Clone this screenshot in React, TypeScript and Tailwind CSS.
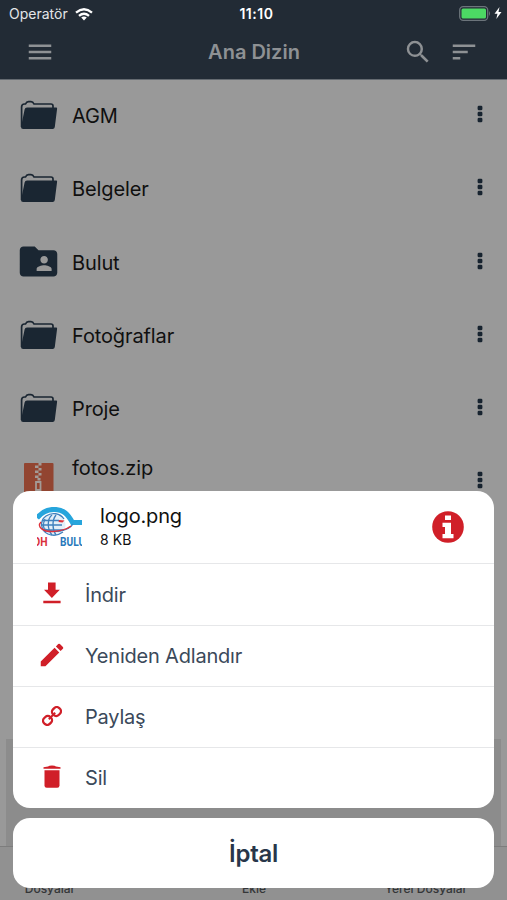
import { MdEdit, MdFolderShared, MdMenu, MdSearch, MdSort } from "react-icons/md";

const FolderIcon = () => (
  <svg viewBox="0 0 38 30" className="w-[38px] h-[30px]">
    <path
      d="M1.600 27V7Q1.600 4 4.500 4H5.500Q6.500 1.700 8.500 1.700H11Q13 1.700 14 4H31Q33 4 33 6V8"
      fill="none"
      stroke="#1a2632"
      strokeWidth="1.700"
    />
    <path d="M7 7.500H36.200Q37.300 7.500 37.100 8.700L34.800 27Q34.500 29 32.600 29H3.300Q0.800 29 1.100 26.500L4.600 9.500Q5 7.500 7 7.500Z" fill="#1a2632" />
  </svg>
);

const ZipIcon = () => (
  <svg viewBox="0 0 30 38" className="w-[30px] h-[38px] ml-1">
    <rect width="29.500" height="38" rx="1" fill="#924531" />
    <path
      d="M14.500 0h3v2.500h-3zM11 2.500h3.500v2.500H11zM14.500 5h3v2.500h-3zM11 7.500h3.500v2.500H11zM14.500 10h3v2.500h-3zM11 12.500h3.500v2.500H11zM13.500 15h3v2.500h-3z"
      fill="#a39b97"
    />
    <path d="M12 19h4.500v8H12z" fill="none" stroke="#a39b97" strokeWidth="1.800" />
  </svg>
);

const DotsIcon = () => (
  <svg viewBox="0 0 6 18" className="w-[6px] h-[18px]" fill="#17232f">
    <rect x="0.600" y="0.700" width="4.800" height="4.600" rx="1.300" />
    <rect x="0.600" y="6.700" width="4.800" height="4.600" rx="1.300" />
    <rect x="0.600" y="12.700" width="4.800" height="4.600" rx="1.300" />
  </svg>
);

const DownloadIcon = () => (
  <svg viewBox="0 0 18 22" className="w-[18px] h-[22px] mb-[3px]" fill="#d01f28">
    <path d="M5 0.500h7.600v7.200h4.200L8.900 16 1 7.700h4zM0.300 18.800h17.300v2.500H0.300z" />
  </svg>
);

const LinkIcon = () => (
  <svg viewBox="0 0 20 20" className="w-[20px] h-[20px] mb-[3px]">
    <g transform="rotate(-45 10 10)" fill="none" stroke="#d01f28" strokeWidth="2.300">
      <rect x="-0.700" y="6" width="8.800" height="8" rx="3.500" />
      <rect x="11.900" y="6" width="8.800" height="8" rx="3.500" />
      <path d="M5.500 10h9" strokeWidth="2" />
    </g>
  </svg>
);

const TrashIcon = () => (
  <svg viewBox="0 0 18 23" className="w-[18px] h-[23px] mb-[3px]" fill="#d01f28">
    <path d="M0.500 2.200L5 1.600Q6 0.500 9 0.500T13 1.600L17.500 2.200V3.800H0.500z" />
    <path d="M1.500 5.300h15v15.200Q16.500 22.700 14.300 22.700H3.700Q1.500 22.700 1.500 20.500z" />
  </svg>
);

const InfoIcon = () => (
  <svg viewBox="0 0 32 32" className="w-[32px] h-[32px]">
    <circle cx="16" cy="16" r="15.800" fill="#d01f28" />
    <path d="M13 4.500h6v4.500h-6zM10.500 11.800h8.500v11.200h2.500v4.200h-11v-4.200h2.500v-7h-2.500z" fill="#fff" />
  </svg>
);

const LogoIcon = () => (
  <svg viewBox="0 0 45 40" className="w-[45px] h-[40px]">
    <ellipse cx="16" cy="18" rx="12.500" ry="10.500" fill="#e4eff8" />
    <g fill="none" stroke="#3f80bd" strokeWidth="1.300">
      <path d="M27 12C23 6 15 5 9 9C2 14 4 24 11 27C16 29 22 28 26 25" />
      <path d="M15 8C10 12 10 22 15 28M19 8C15 13 15 22 19 28M8 12C6 16 6 21 9 25" />
      <path d="M6 13.500H22M4 18H25M6 23H27" />
    </g>
    <path d="M0 11C5 4.500 11 2.400 17 2.400C27 2.400 31 7.500 35.500 15.500H45" fill="none" stroke="#27a5dc" strokeWidth="5" />
    <path d="M8 22C16 26 31 25 36 17" fill="none" stroke="#3f80bd" strokeWidth="1.300" />
    <path d="M4 15C-1 20 7 25 16 24.500C24 24 30 22 34 19" fill="none" stroke="#df3039" strokeWidth="1.400" />
    <path d="M22 13l5.500 0.500-2 2-4-0.500z" fill="#df3039" />
    <g fontSize="12" fontWeight="700" fontFamily="Roboto, sans-serif">
      <text x="-4" y="38.500" textLength="14.500" lengthAdjust="spacingAndGlyphs" fill="#d9303b">OH</text>
      <text x="23" y="38.500" textLength="31.500" lengthAdjust="spacingAndGlyphs" fill="#2879bb">BULUT</text>
    </g>
  </svg>
);

const files = [
  { name: "AGM", icon: <FolderIcon /> },
  { name: "Belgeler", icon: <FolderIcon /> },
  { name: "Bulut", icon: <MdFolderShared className="size-[45px] -ml-1 text-[#1a2632]" /> },
  { name: "Fotoğraflar", icon: <FolderIcon /> },
  { name: "Proje", icon: <FolderIcon /> },
];

const actions = [
  { label: "İndir", icon: <DownloadIcon /> },
  { label: "Yeniden Adlandır", icon: <MdEdit className="size-[30px] mb-[3px] text-[#d01f28]" /> },
  { label: "Paylaş", icon: <LinkIcon /> },
  { label: "Sil", icon: <TrashIcon /> },
];

const Header = () => (
  <header className="h-[80px] shrink-0 bg-[#222b35] border-b border-[#646a70]">
    <div className="h-7 grid grid-cols-3 items-center pl-[9px] pr-[5px] text-white text-[14px] leading-none">
      <div className="flex items-center gap-[7px]">
        <span className="text-[#e4e6e8]">Operatör</span>
        <svg viewBox="0 0 18 13" className="w-[18px] h-[13px]" fill="none" stroke="#fff" strokeWidth="2.300">
          <path d="M1 4.600Q9-2 17 4.600M4 7.800Q9 3.600 14 7.800" />
          <path d="M9 12.500L6.200 9.600Q9 7.500 11.800 9.600z" fill="#fff" stroke="none" />
        </svg>
      </div>
      <span className="pl-[2px] text-center font-semibold tracking-[0.55px]">11:10</span>
      <div className="flex items-center justify-end gap-[3px] pb-[2px]">
        <svg viewBox="0 0 32 15" className="w-[32px] h-[15px]">
          <rect x="0.700" y="0.700" width="28" height="13.600" rx="3.500" fill="none" stroke="#6c747b" strokeWidth="1.300" />
          <rect x="2.500" y="2.500" width="24.500" height="10" rx="1.500" fill="#4cd964" />
          <path d="M30 5q2 2.500 0 5z" fill="#6c747b" />
        </svg>
        <svg viewBox="0 0 8 12" className="w-[8px] h-[12px]" fill="#fff">
          <path d="M5.500 0L0.500 6.700H3.500L2.300 12L7.500 5H4.500z" />
        </svg>
      </div>
    </div>
    <div className="h-[48px] grid grid-cols-[100px_1fr_100px] items-center px-[25px] text-[#8e9194]">
      <MdMenu className="size-[30px]" />
      <h1 className="pl-[1px] text-center text-[20px] font-semibold">Ana Dizin</h1>
      <div className="flex justify-end gap-[16px]">
        <MdSearch className="size-[30px]" />
        <MdSort className="size-[30px] mr-[3px]" />
      </div>
    </div>
  </header>
);

const ActionSheet = () => (
  <div className="absolute inset-x-[13px] bottom-[12px] flex flex-col gap-[10px]">
    <div className="rounded-[17px] bg-white overflow-hidden">
      <div className="h-[72px] flex items-center pl-6 pr-[30px]">
        <LogoIcon />
        <div className="ml-[18px] pb-[3px] flex-1 flex flex-col gap-[2px] text-[#111]">
          <span className="text-[20px] leading-[26px] tracking-[-0.15px]">logo.png</span>
          <span className="text-[14px] leading-[17px] tracking-[0.1px]">8 KB</span>
        </div>
        <InfoIcon />
      </div>
      {actions.map((action) => (
        <button key={action.label} className="w-full h-[61px] nth-2:h-[62px] flex items-center border-t border-[#e6e7e9] text-left">
          <span className="w-[78px] flex justify-center">{action.icon}</span>
          <span className="-ml-[6px] text-[20px] tracking-[-0.2px] text-[#3b495a]">{action.label}</span>
        </button>
      ))}
    </div>
    <button className="h-[70px] pt-[2px] rounded-[17px] bg-white text-[24px] font-semibold tracking-[-0.3px] text-[#28364a]">İptal</button>
  </div>
);

const App = () => {
  return (
    <div className="relative w-full h-[900px] flex flex-col overflow-hidden bg-[#999] font-['Inter',sans-serif]">
      <Header />
      <main className="flex-1 min-h-0 flex flex-col">
        {files.map((file) => (
          <div key={file.name} className="h-[73.3px] shrink-0 flex items-center pl-5 pr-6">
            <span className="w-[52px] pb-1">{file.icon}</span>
            <span className="flex-1 pb-[1px] text-[20px] tracking-[-0.12px] text-[#101010]">{file.name}</span>
            <span className="pb-[5px]">
              <DotsIcon />
            </span>
          </div>
        ))}
        <div className="h-[73.3px] shrink-0 flex items-center pl-5 pr-6">
          <span className="w-[52px] pb-[3px]">
            <ZipIcon />
          </span>
          <span className="flex-1 pb-[31px] text-[20px] tracking-[-0.05px] text-[#101010]">fotos.zip</span>
          <span className="pb-[6px]">
            <DotsIcon />
          </span>
        </div>
      </main>
      <div className="mx-[6px] h-[107px] shrink-0 bg-[#8c8c8c]" />
      <nav className="h-[54px] shrink-0 grid grid-cols-[100px_1fr_162px] items-end border-t border-[#7d7d7d] bg-[#919191] pb-[3px] text-center text-[12px] leading-[16px] font-medium text-[#343638]">
        <span>Dosyalar</span>
        <span className="pl-[63px]">Ekle</span>
        <span>Yerel Dosyalar</span>
      </nav>
      <ActionSheet />
    </div>
  );
};

export default App;
